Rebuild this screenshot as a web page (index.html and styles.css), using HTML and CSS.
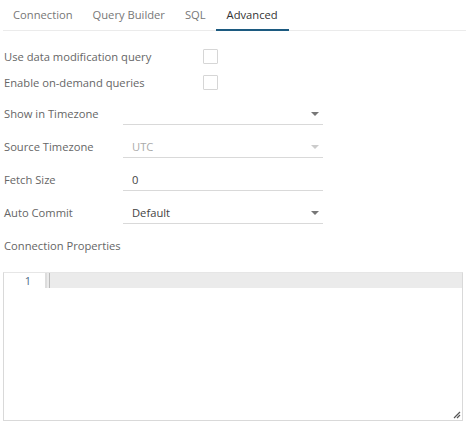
FILE: index.html
```html
<!DOCTYPE html>
<html>
    <head>
        <link rel="stylesheet" href="styles.css">
    </head>
    <body>
        <div class="tabs">
            <div class="tab">Connection</div>
            <div class="tab">Query Builder</div>
            <div class="tab">SQL</div>
            <div class="tab active">Advanced</div>
        </div>
        <div class="form">
            <div class="row check-row">
                <label>Use data modification query</label><span class="checkbox"></span>
            </div>
            <div class="row check-row">
                <label>Enable on-demand queries</label><span class="checkbox"></span>
            </div>
            <div class="row field-row first">
                <label>Show in Timezone</label>
                <div class="field select"><span class="value"></span><span class="caret"></span></div>
            </div>
            <div class="row field-row">
                <label>Source Timezone</label>
                <div class="field select disabled"><span class="value">UTC</span><span class="caret"></span></div>
            </div>
            <div class="row field-row">
                <label>Fetch Size</label>
                <div class="field"><span class="value">0</span></div>
            </div>
            <div class="row field-row">
                <label>Auto Commit</label>
                <div class="field select"><span class="value">Default</span><span class="caret"></span></div>
            </div>
            <div class="row section-label">Connection Properties</div>
        </div>
        <div class="editor">
            <div class="line">
                <div class="gutter">1</div>
                <div class="code"><span class="cursor"></span></div>
            </div>
            <svg class="grip" width="8" height="8" viewBox="0 0 8 8">
                <path d="M7 1 L1 7 M7 4 L4 7" stroke="#555" stroke-width="1.2" fill="none"/>
            </svg>
        </div>
    </body>
</html>
```

FILE: styles.css
```css
body {
    margin: 0;
    font-family: "Open Sans", sans-serif;
    font-size: 11.2px;
    color: #666;
    background: #fff;
    width: 466px;
    height: 426px;
    overflow: hidden;
}

.tabs {
    display: flex;
    margin-left: 3px;
    height: 30px;
    border-bottom: 1px solid #ebebeb;
}

.tab {
    padding: 0 10px;
    line-height: 29px;
    color: #777;
}

.tab.active {
    color: #333;
    border-bottom: 2px solid #1c5a80;
    height: 29px;
    padding: 0 11px;
}

.form {
    padding-left: 4px;
    padding-top: 12px;
}

.row {
    display: flex;
    align-items: center;
}

.row label {
    width: 119px;
    flex: none;
}

.check-row {
    height: 26px;
}

.check-row label {
    width: 199px;
}

.checkbox {
    width: 13px;
    height: 13px;
    border: 1px solid #d6d6d6;
    border-radius: 1px;
}

.field-row {
    height: 33px;
}

.field-row.first {
    margin-top: 2px;
}

.field {
    width: 200px;
    height: 21px;
    border-bottom: 1px solid #d9d9d9;
    display: flex;
    align-items: center;
    justify-content: space-between;
    box-sizing: border-box;
    margin-top: 1px;
}

.value {
    padding-left: 9px;
    color: #444;
}

.disabled .value {
    color: #aaa;
}

.caret {
    width: 0;
    height: 0;
    border-left: 4px solid transparent;
    border-right: 4px solid transparent;
    border-top: 4px solid #777;
    margin-right: 4px;
}

.disabled .caret {
    border-top-color: #ccc;
}

.section-label {
    height: 33px;
}

.editor {
    position: relative;
    margin: 10px 3px 0 3px;
    height: 147px;
    border: 1px solid #d9d9d9;
    border-top-color: #e6e6e6;
}

.line {
    display: flex;
    height: 15px;
}

.gutter {
    width: 27px;
    padding-right: 14px;
    text-align: right;
    font-size: 11px;
    line-height: 15px;
    color: #4c6a86;
    background: #fff;
}

.code {
    flex: 1;
    background: #ebebeb;
    border-left: 2px solid #ddd;
}

.cursor {
    display: block;
    margin-left: 2px;
    width: 1px;
    height: 15px;
    background: #bbb;
}

.grip {
    position: absolute;
    right: 1px;
    bottom: 1px;
}
```
